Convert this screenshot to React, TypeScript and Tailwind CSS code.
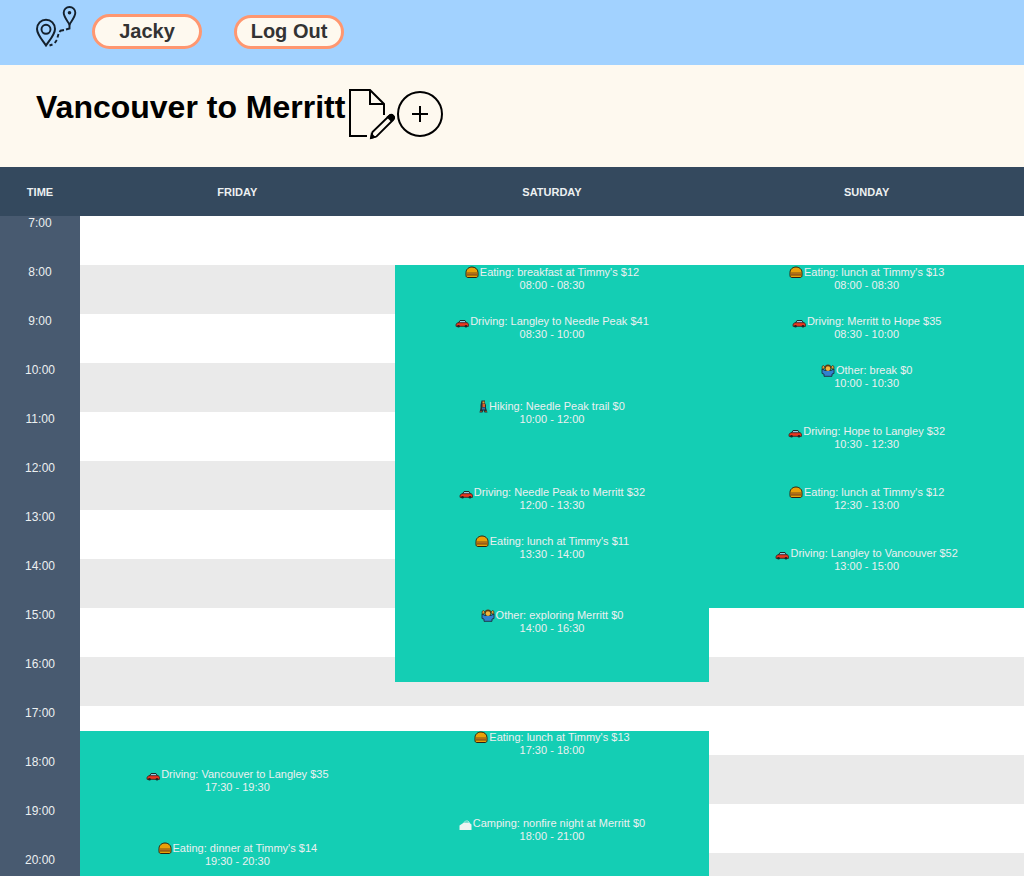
type Kind = 'Eating' | 'Driving' | 'Hiking' | 'Camping' | 'Other';

interface Activity {
  kind: Kind;
  title: string;
  cost: number;
  start: string;
  end: string;
}

const FIRST_HOUR = 7;
const LAST_HOUR = 21;

const days: { name: string; activities: Activity[] }[] = [
  {
    name: 'Friday',
    activities: [
      { kind: 'Driving', title: 'Vancouver to Langley', cost: 35, start: '17:30', end: '19:30' },
      { kind: 'Eating', title: "dinner at Timmy's", cost: 14, start: '19:30', end: '20:30' },
    ],
  },
  {
    name: 'Saturday',
    activities: [
      { kind: 'Eating', title: "breakfast at Timmy's", cost: 12, start: '08:00', end: '08:30' },
      { kind: 'Driving', title: 'Langley to Needle Peak', cost: 41, start: '08:30', end: '10:00' },
      { kind: 'Hiking', title: 'Needle Peak trail', cost: 0, start: '10:00', end: '12:00' },
      { kind: 'Driving', title: 'Needle Peak to Merritt', cost: 32, start: '12:00', end: '13:30' },
      { kind: 'Eating', title: "lunch at Timmy's", cost: 11, start: '13:30', end: '14:00' },
      { kind: 'Other', title: 'exploring Merritt', cost: 0, start: '14:00', end: '16:30' },
      { kind: 'Eating', title: "lunch at Timmy's", cost: 13, start: '17:30', end: '18:00' },
      { kind: 'Camping', title: 'nonfire night at Merritt', cost: 0, start: '18:00', end: '21:00' },
    ],
  },
  {
    name: 'Sunday',
    activities: [
      { kind: 'Eating', title: "lunch at Timmy's", cost: 13, start: '08:00', end: '08:30' },
      { kind: 'Driving', title: 'Merritt to Hope', cost: 35, start: '08:30', end: '10:00' },
      { kind: 'Other', title: 'break', cost: 0, start: '10:00', end: '10:30' },
      { kind: 'Driving', title: 'Hope to Langley', cost: 32, start: '10:30', end: '12:30' },
      { kind: 'Eating', title: "lunch at Timmy's", cost: 12, start: '12:30', end: '13:00' },
      { kind: 'Driving', title: 'Langley to Vancouver', cost: 52, start: '13:00', end: '15:00' },
    ],
  },
];

// Index of the half-hour slot that a clock time falls on.
function slotOf(time: string) {
  const [h, m] = time.split(':').map(Number);
  return (h - FIRST_HOUR) * 2 + (m >= 30 ? 1 : 0);
}

function KindIcon({ kind }: { kind: Kind }) {
  switch (kind) {
    case 'Eating':
      return (
        <svg viewBox="0 0 14 13" className="h-[13px] w-[14px] shrink-0" aria-hidden="true">
          <path d="M1 6.500C1 3 4 1 7 1s6 2 6 5.500v3c0 1.500-1 2-2 2H3c-1 0-2-.5-2-2Z" fill="#eaa008" stroke="#2c2210" />
          <path d="M1.500 6.500h11v1h-11z" fill="#7c5416" />
          <path d="M1.500 7.500h11V9h-11z" fill="#b0661a" />
          <path d="M1.500 9.200h11" stroke="#4a3212" strokeWidth="0.600" />
        </svg>
      );
    case 'Driving':
      return (
        <svg viewBox="0 0 14 13" className="h-[13px] w-[14px] shrink-0" aria-hidden="true">
          <path d="M3.500 8 5 5.500h5L11.500 8" fill="#8fcbe4" stroke="#1d2b2b" />
          <path d="M1 10.500c0-2 1-2.800 3-2.800h7.500c1.500 0 2 .8 2 2.800v.8H1Z" fill="#ea3620" stroke="#3b1414" strokeWidth="0.800" />
          <circle cx="3.500" cy="11.300" r="1.300" fill="#222" />
          <circle cx="11" cy="11.300" r="1.300" fill="#222" />
        </svg>
      );
    case 'Hiking':
      return (
        <svg viewBox="0 0 9 13" className="h-[13px] w-[9px] shrink-0" aria-hidden="true">
          <path d="M2.500.5h3.500v2.500l1 2v3l1.500 4.500H5.500L4.500 10l-1 2.500H.5l1-4.500V5Z" fill="#243038" />
          <path d="M3.500 1.500h2v2h-2z" fill="#e8a02c" />
          <path d="M3.500 4h2.500v3H3.500z" fill="#e0602a" />
          <path d="M3 7.500h3v2H3z" fill="#3273a8" />
          <path d="M1 11.500h2M6 11.500h2" stroke="#7b4a20" />
        </svg>
      );
    case 'Camping':
      return (
        <svg viewBox="0 0 13 13" className="h-[13px] w-[13px] shrink-0" aria-hidden="true">
          <path d="M.5 13V8.500L3.500 6.500 5 5.500h5l2.500 2v5.500Z" fill="#eef3f1" />
          <path d="M5 5.500 6.500 4h2.500l1.500 2" fill="none" stroke="#d5efea" strokeWidth="0.800" />
        </svg>
      );
    default:
      return (
        <svg viewBox="0 0 14 13" className="h-[13px] w-[14px] shrink-0" aria-hidden="true">
          <path d="M1 5v4.500l2 .5v2.300h8V10l2-.5V5l-3 1.500H4Z" fill="#3181cf" stroke="#1c2c3c" strokeWidth="0.900" />
          <circle cx="7" cy="3.800" r="3.200" fill="#5b3c14" />
          <circle cx="7" cy="4.600" r="2.300" fill="#f2b63c" />
          <path d="M1 2.500 2.500 1.500 4 3 3 5H1.200ZM13 2.500l-1.500-1L10 3l1 2h1.800Z" fill="#dca038" stroke="#2c2a1c" strokeWidth="0.700" />
        </svg>
      );
  }
}

function Logo() {
  return (
    <svg viewBox="0 0 42 42" className="h-[42px] w-[42px]" fill="none" stroke="#14202c" aria-hidden="true">
      <path d="M11 40.500C8 36 2 29.500 2 24a9 9.300 0 0 1 18 0C20 29.500 14 36 11 40.500Z" strokeWidth="2" />
      <circle cx="11" cy="24.300" r="4.500" strokeWidth="1.900" />
      <path d="M34.500 19.500C33 16.500 28.700 12 28.700 7.800a5.800 5.800 0 0 1 11.600 0c0 4.200-4.300 8.700-5.800 11.700Z" strokeWidth="1.900" />
      <circle cx="34.500" cy="7.800" r="1.800" fill="#14202c" stroke="none" />
      <path d="M34.500 19v4.500l-3.500 1M29 25l-3.500.7-1 1.300M23.500 29l-1 3.500M21.800 35l-2 3M17.500 39.500 14.500 40.500" strokeWidth="1.900" />
    </svg>
  );
}

function Schedule() {
  const slots = Array.from({ length: (LAST_HOUR - FIRST_HOUR) * 2 }, (_, i) => i);

  return (
    <table className="w-full table-fixed border-collapse text-center text-[11px] text-[#ecf0f1]">
      <colgroup>
        <col className="w-20" />
        <col />
        <col />
        <col />
      </colgroup>
      <thead className="bg-[#34495e] uppercase">
        <tr className="h-[49px]">
          <th scope="col" className="pt-0.5">
            Time
          </th>
          {days.map((day) => (
            <th key={day.name} scope="col" className="pt-0.5">
              {day.name}
            </th>
          ))}
        </tr>
      </thead>
      <tbody>
        {slots.map((slot) => {
          const onHour = slot % 2 === 0;
          const band = Math.floor(slot / 2) % 2 === 0 ? 'bg-white' : 'bg-[#eaeaea]';
          return (
            <tr key={slot} className={`${onHour ? 'h-[25px]' : 'h-6'} ${band}`}>
              {onHour && (
                <th scope="row" rowSpan={2} className="bg-[#485a70] p-0 align-top text-xs leading-[14px] font-normal">
                  {FIRST_HOUR + slot / 2}:00
                </th>
              )}
              {days.map((day) => {
                const activity = day.activities.find((a) => slotOf(a.start) === slot);
                if (activity) {
                  return (
                    <td
                      key={day.name}
                      rowSpan={slotOf(activity.end) - slot}
                      className="bg-[#14ceb4] p-0 pt-0.5 align-middle leading-[13px]"
                    >
                      <div className="flex h-0 flex-col items-center justify-center">
                        <div className="flex shrink-0 items-center gap-px whitespace-nowrap">
                          <KindIcon kind={activity.kind} />
                          <span>
                            {activity.kind}: {activity.title} ${activity.cost}
                          </span>
                        </div>
                        <div className="shrink-0">
                          {activity.start} - {activity.end}
                        </div>
                      </div>
                    </td>
                  );
                }
                const covered = day.activities.some((a) => slotOf(a.start) < slot && slot < slotOf(a.end));
                return covered ? null : <td key={day.name} className="p-0" />;
              })}
            </tr>
          );
        })}
      </tbody>
    </table>
  );
}

export default function App() {
  return (
    <div className="h-screen overflow-hidden bg-[#fef9ef] font-['Liberation_Sans',Arial,sans-serif]">
      <nav className="flex h-[65px] items-start bg-[#a2d2ff] pl-[35px]">
        <a href="#home" aria-label="Home" className="mt-[5px]">
          <Logo />
        </a>
        <div className="ml-[15px] flex items-end gap-8 pt-[14px] text-xl font-bold text-[#333333]">
          <button className="flex h-[35px] w-[110px] items-center justify-center rounded-full border-[3px] border-[#ff9770] bg-[#fef9ef] pb-0.5">
            Jacky
          </button>
          <button className="flex h-[34px] w-[110px] items-center justify-center rounded-full border-[3px] border-[#ff9770] bg-[#fef9ef] pb-0.5">
            Log Out
          </button>
        </div>
      </nav>

      <header className="flex h-[102px] items-start px-9 pt-[22px]">
        <h1 className="mt-[2px] text-[32px] leading-9 font-bold text-black">Vancouver to Merritt</h1>
        <button aria-label="Edit trip" className="ml-[2px]">
          <svg viewBox="0 0 50 54" className="h-[54px] w-[50px]" fill="none" stroke="#000" strokeWidth="2" aria-hidden="true">
            <path d="M20 49H3V3h20l14 14v11M23 3v14h14" />
            <path d="m25.500 45 16.500-16a2.600 2.600 0 0 1 4 4L29.500 49.500 24 51Z" strokeWidth="1.800" />
            <path d="m40.500 30 1.800-1.500a2.600 2.600 0 0 1 4 4L44.500 34ZM24.500 47l3 3.200-3.500 1Z" fill="#000" strokeWidth="1.500" />
          </svg>
        </button>
        <button aria-label="Add activity" className="mt-[3px] -ml-[1px]">
          <svg viewBox="0 0 48 48" className="h-12 w-12" fill="none" stroke="#000" strokeWidth="2" aria-hidden="true">
            <circle cx="24" cy="24" r="22" />
            <path d="M24 16v16M16 24h16" />
          </svg>
        </button>
      </header>

      <Schedule />
    </div>
  );
}
